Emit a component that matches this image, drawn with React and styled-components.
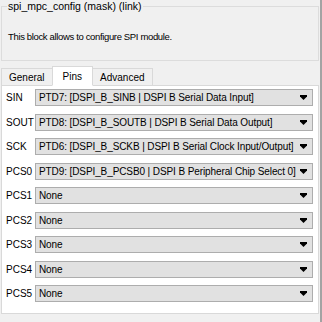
import React from 'react'
import styled, { createGlobalStyle } from 'styled-components'

const GlobalStyle = createGlobalStyle`
body {
  margin: 0;
  background: #f0f0f0;
  font-family: Tahoma, "Liberation Sans", Arial, sans-serif;
  font-size: 10px;
  color: #000;
}
`

const pins = [
    { name: 'SIN', value: 'PTD7: [DSPI_B_SINB | DSPI B Serial Data Input]' },
    { name: 'SOUT', value: 'PTD8: [DSPI_B_SOUTB | DSPI B Serial Data Output]' },
    { name: 'SCK', value: 'PTD6: [DSPI_B_SCKB | DSPI B Serial Clock Input/Output]' },
    { name: 'PCS0', value: 'PTD9: [DSPI_B_PCSB0 | DSPI B Peripheral Chip Select 0]' },
    { name: 'PCS1', value: 'None' },
    { name: 'PCS2', value: 'None' },
    { name: 'PCS3', value: 'None' },
    { name: 'PCS4', value: 'None' },
    { name: 'PCS5', value: 'None' },
]

const tabs = ['General', 'Pins', 'Advanced']

const App = () => {
    return (
        <Frame>
            <GlobalStyle />
            <GroupBox>
                <Legend>spi_mpc_config (mask) (link)</Legend>
                <Description>This block allows to configure SPI module.</Description>
            </GroupBox>
            <TabBar>
                {tabs.map(t => (
                    <Tab key={t} $active={t === 'Pins'}>{t}</Tab>
                ))}
            </TabBar>
            <TabPane>
                {pins.map(p => (
                    <React.Fragment key={p.name}>
                        <PinLabel>{p.name}</PinLabel>
                        <Combo>
                            <ComboText>{p.value}</ComboText>
                            <Arrow width="7" height="5" viewBox="0 0 7 5">
                                <path d="M0 0H7V1.5L3.5 5L0 1.5Z" fill="#000" />
                            </Arrow>
                        </Combo>
                    </React.Fragment>
                ))}
            </TabPane>
        </Frame>
    )
}

export default App

const Frame = styled.div`
width: 322px;
height: 322px;
box-sizing: border-box;
border-right: 2px solid #a3a3a3;
display: flex;
flex-direction: column;
background: #f0f0f0;
overflow: hidden;
`
const GroupBox = styled.fieldset`
margin: 0 1px 0 1px;
padding: 0 0 0 6px;
height: 61px;
box-sizing: border-box;
border: 1px solid #dcdcdc;
`
const Legend = styled.legend`
margin-left: -1px;
padding: 0 1px;
line-height: 12px;
font-size: 10.5px;
`
const Description = styled.div`
padding-top: 19px;
font-size: 9.5px;
letter-spacing: -0.35px;
`
const TabBar = styled.div`
display: flex;
align-items: flex-end;
margin-top: 5px;
padding-left: 1px;
height: 20px;
position: relative;
z-index: 1;
margin-bottom: -1px;
`
const Tab = styled.div`
box-sizing: border-box;
height: ${p => (p.$active ? '20px' : '18px')};
padding: 0 ${p => (p.$active ? '10px' : '7px')};
margin-left: ${p => (p.$active ? '-1px' : '0')};
margin-right: ${p => (p.$active ? '-1px' : '0')};
background: ${p => (p.$active ? '#fff' : '#f0f0f0')};
border: 1px solid #d9d9d9;
border-bottom: ${p => (p.$active ? '1px solid #fff' : '1px solid #d9d9d9')};
display: flex;
align-items: center;
z-index: ${p => (p.$active ? 2 : 1)};
`
const TabPane = styled.div`
margin: 0 1px 0 1px;
height: 229px;
box-sizing: border-box;
background: #fff;
border: 1px solid #d9d9d9;
padding: 3px 5px 0 3px;
display: grid;
grid-template-columns: 30px minmax(0, 1fr);
grid-auto-rows: 17px;
row-gap: 7.5px;
align-items: center;
`
const PinLabel = styled.div`
padding-left: 1px;
white-space: nowrap;
`
const Combo = styled.div`
height: 17px;
min-width: 0;
box-sizing: border-box;
background: #e1e1e1;
border: 1px solid #adadad;
display: flex;
align-items: center;
padding: 0 5px 0 3px;
`
const ComboText = styled.span`
flex: 1;
min-width: 0;
white-space: nowrap;
overflow: hidden;
letter-spacing: -0.1px;
`
const Arrow = styled.svg`
flex: none;
`
